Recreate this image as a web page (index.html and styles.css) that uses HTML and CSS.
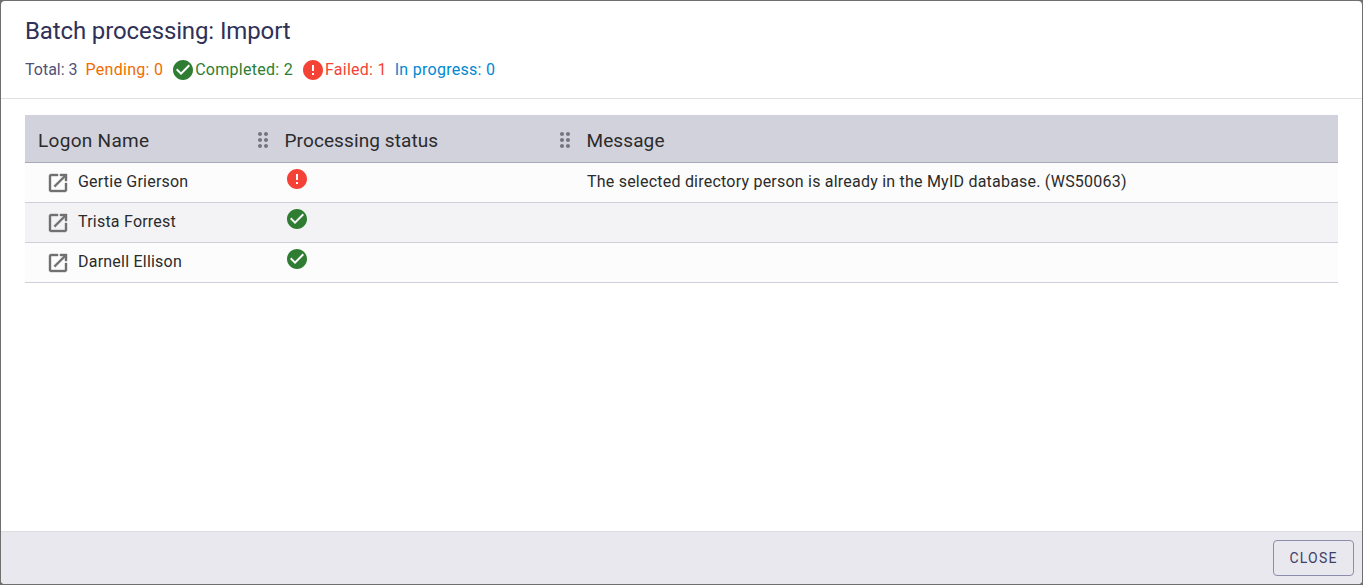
FILE: index.html
```html
<!DOCTYPE html>
<html lang="en">
<head>
<meta charset="utf-8">
<title>Batch processing: Import</title>
<link rel="stylesheet" href="styles.css">
<svg class="defs" width="0" height="0" aria-hidden="true">
  <symbol id="ok" viewBox="0 0 24 24"><path d="M12 2C6.48 2 2 6.48 2 12s4.48 10 10 10 10-4.48 10-10S17.52 2 12 2zm-2 15-5-5 1.41-1.41L10 14.17l7.59-7.59L19 8l-9 9z"/></symbol>
  <symbol id="err" viewBox="0 0 24 24"><path d="M12 2C6.48 2 2 6.48 2 12s4.48 10 10 10 10-4.48 10-10S17.52 2 12 2zm1 15h-2v-2h2v2zm0-4h-2V7h2v6z"/></symbol>
  <symbol id="open" viewBox="0 0 24 24"><path d="M19 19H5V5h7V3H5c-1.11 0-2 .9-2 2v14c0 1.1.89 2 2 2h14c1.1 0 2-.9 2-2v-7h-2v7zM14 3v2h3.59l-9.83 9.83 1.41 1.41L19 6.41V10h2V3h-7z"/></symbol>
  <symbol id="drag" viewBox="0 0 24 24"><path d="M11 18c0 1.1-.9 2-2 2s-2-.9-2-2 .9-2 2-2 2 .9 2 2zm-2-8c-1.100 0-2 .9-2 2s.9 2 2 2 2-.9 2-2-.9-2-2-2zm0-6c-1.100 0-2 .9-2 2s.9 2 2 2 2-.9 2-2-.9-2-2-2zm6 4c1.100 0 2-.9 2-2s-.9-2-2-2-2 .9-2 2 .9 2 2 2zm0 2c-1.100 0-2 .9-2 2s.9 2 2 2 2-.9 2-2-.9-2-2-2zm0 6c-1.100 0-2 .9-2 2s.9 2 2 2 2-.9 2-2-.9-2-2-2z"/></symbol>
</svg>
</head>
<body>
<main class="dialog">
  <header class="head">
    <h1 class="title">Batch processing: Import</h1>
    <div class="summary">
      <span class="stat total">Total: 3</span>
      <span class="stat pending">Pending: 0</span>
      <span class="stat completed"><svg class="stat-icon"><use href="#ok"/></svg>Completed: 2</span>
      <span class="stat failed"><svg class="stat-icon"><use href="#err"/></svg>Failed: 1</span>
      <span class="stat progress">In progress: 0</span>
    </div>
  </header>
  <section class="content">
    <div class="grid">
      <div class="row hdr">
        <div class="cell c1">Logon Name<svg class="drag"><use href="#drag"/></svg></div>
        <div class="cell c2">Processing status<svg class="drag"><use href="#drag"/></svg></div>
        <div class="cell c3">Message</div>
      </div>
      <div class="row">
        <div class="cell c1 name"><svg class="open"><use href="#open"/></svg>Gertie Grierson</div>
        <div class="cell c2"><svg class="status err"><use href="#err"/></svg></div>
        <div class="cell c3">The selected directory person is already in the MyID database. (WS50063)</div>
      </div>
      <div class="row alt">
        <div class="cell c1 name"><svg class="open"><use href="#open"/></svg>Trista Forrest</div>
        <div class="cell c2"><svg class="status ok"><use href="#ok"/></svg></div>
        <div class="cell c3"></div>
      </div>
      <div class="row">
        <div class="cell c1 name"><svg class="open"><use href="#open"/></svg>Darnell Ellison</div>
        <div class="cell c2"><svg class="status ok"><use href="#ok"/></svg></div>
        <div class="cell c3"></div>
      </div>
    </div>
  </section>
  <footer class="foot">
    <button class="close" type="button">Close</button>
  </footer>
</main>
</body>
</html>
```

FILE: styles.css
```css
* { box-sizing: border-box; }
html, body { height: 100%; }
body {
  margin: 0;
  padding: 1px;
  background: #6f6f6f;
  font-family: Roboto, "Liberation Sans", sans-serif;
  overflow: hidden;
}
.defs { display: block; height: 0; }
.dialog {
  height: 583px;
  background: #fff;
  border-radius: 4px;
  display: flex;
  flex-direction: column;
  overflow: hidden;
}
.head {
  height: 98px;
  flex: none;
  padding: 16px 24px 0;
  border-bottom: 1px solid #e0e0e0;
}
.title {
  margin: 0;
  font-size: 24px;
  line-height: 28px;
  font-weight: 400;
  letter-spacing: -0.12px;
  color: #2f3158;
}
.summary {
  display: flex;
  align-items: center;
  gap: 8px;
  margin-top: 13px;
  font-size: 16px;
  line-height: 24px;
  letter-spacing: 0.27px;
}
.stat { display: flex; align-items: center; }
.stat-icon { width: 24px; height: 24px; fill: currentColor; }
.total { color: #50527a; letter-spacing: 0; }
.pending { color: #ef6c00; }
.completed { color: #2e7d32; }
.failed { color: #f44336; }
.progress { color: #0288d1; }
.content {
  flex: 1;
  padding: 16px 24px 0;
}
.grid { width: 1313px; }
.row {
  display: grid;
  grid-template-columns: 247px 302px 764px;
  height: 40px;
  background: #fcfcfc;
  border-bottom: 1px solid #cfcfdb;
  color: #2b2b2b;
  font-size: 16px;
  letter-spacing: 0.22px;
}
.row.alt { background: #f3f3f6; }
.row.hdr {
  height: 48px;
  background: #d2d2dd;
  border-bottom: 1px solid #a9a9bd;
  font-size: 19px;
  letter-spacing: 0.1px;
}
.cell {
  display: flex;
  align-items: center;
  padding-left: 13px;
  padding-bottom: 2px;
  position: relative;
}
.hdr .cell { padding-bottom: 0; padding-top: 3px; }
.hdr .c1 { letter-spacing: 0.3px; }
.hdr .c2, .hdr .c3 { padding-left: 12.5px; }
.name { padding-left: 21px; }
.drag {
  width: 24px;
  height: 24px;
  fill: #75757f;
  position: absolute;
  right: -3px;
  top: 13px;
}
.open {
  width: 24px;
  height: 24px;
  fill: #707070;
  stroke: #707070;
  stroke-width: 0.4;
  margin-right: 8px;
  position: relative;
  top: 1px;
}
.status {
  width: 24px;
  height: 24px;
  position: relative;
  top: -3px;
  left: 0;
}
.status.ok { fill: #2e7d32; }
.status.err { fill: #f44336; }
.foot {
  height: 53px;
  flex: none;
  background: #e8e8ee;
  border-top: 1px solid #dcdce2;
  display: flex;
  justify-content: flex-end;
  align-items: flex-start;
  padding: 8px 8px 0 0;
}
.close {
  width: 81px;
  height: 36px;
  background: transparent;
  border: 1px solid #8d8eaa;
  border-radius: 4px;
  color: #3d3f66;
  font-family: inherit;
  font-size: 14px;
  letter-spacing: 1.2px;
  text-transform: uppercase;
  padding: 0;
}
```
